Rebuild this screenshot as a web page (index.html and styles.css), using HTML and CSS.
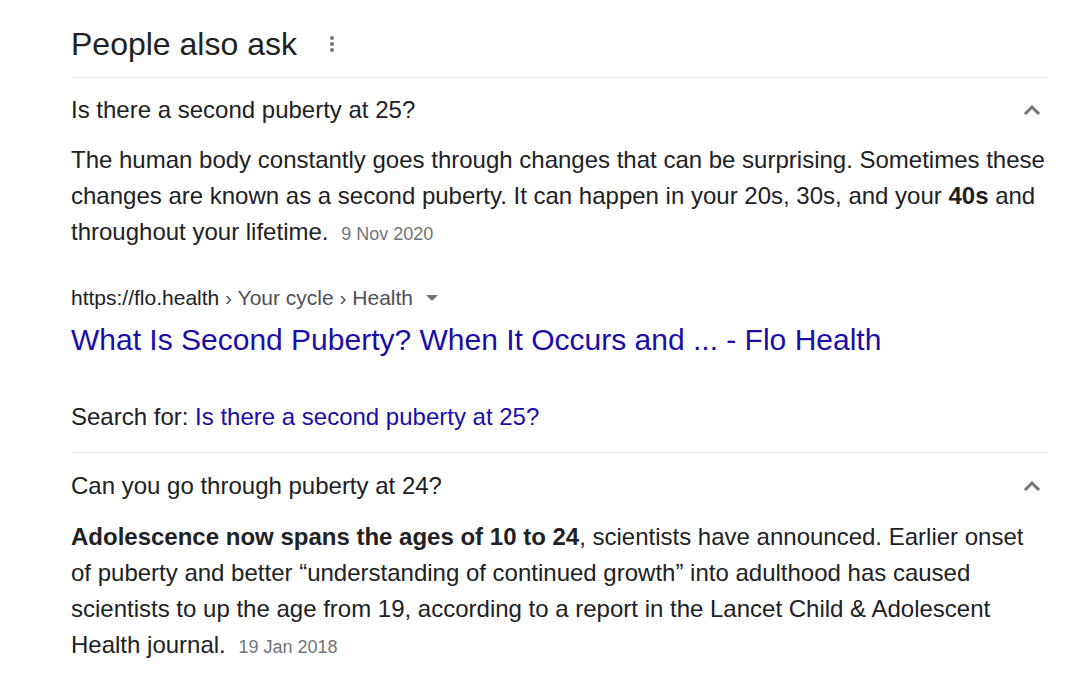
FILE: index.html
```html
<!DOCTYPE html>
<html>
  <head>
    <title>People also ask</title>
    <meta http-equiv="Content-Type" content="text/html; charset=UTF-8"/>
    <link rel="stylesheet" href="styles.css">
  </head>
  <body>
    <div class="paa">
      <div class="paa-head">
        <h2>People also ask</h2>
        <span class="more" aria-label="More options">
          <svg width="6" height="18" viewBox="0 0 6 18"><circle cx="3" cy="3" r="2"/><circle cx="3" cy="9" r="2"/><circle cx="3" cy="15" r="2"/></svg>
        </span>
      </div>

      <div class="item">
        <div class="question">
          <span>Is there a second puberty at 25?</span>
          <svg class="chevron" width="20" height="12" viewBox="0 0 20 12"><path d="M3 10 L10 3 L17 10"/></svg>
        </div>
        <div class="answer">
          <p>The human body constantly goes through changes that can be surprising. Sometimes these changes are known as a second puberty. It can happen in your 20s, 30s, and your <b>40s</b> and throughout your lifetime. <span class="date">9 Nov 2020</span></p>
          <div class="cite">https://flo.health <span class="crumbs">› Your cycle › Health</span><svg class="caret" width="14" height="8" viewBox="0 0 14 8"><path d="M1 1 L13 1 L7 7 Z"/></svg></div>
          <a class="title" href="#">What Is Second Puberty? When It Occurs and ... - Flo Health</a>
          <div class="search-for">Search for: <a href="#">Is there a second puberty at 25?</a></div>
        </div>
      </div>

      <div class="item">
        <div class="question">
          <span>Can you go through puberty at 24?</span>
          <svg class="chevron" width="20" height="12" viewBox="0 0 20 12"><path d="M3 10 L10 3 L17 10"/></svg>
        </div>
        <div class="answer">
          <p><b>Adolescence now spans the ages of 10 to 24</b>, scientists have announced. Earlier onset of puberty and better “understanding of continued growth” into adulthood has caused scientists to up the age from 19, according to a report in the Lancet Child &amp; Adolescent Health journal. <span class="date">19 Jan 2018</span></p>
        </div>
      </div>
    </div>
  </body>
</html>
```

FILE: styles.css
```css
body {
  margin: 0;
  background: #fff;
  font-family: 'Liberation Sans', Arial, sans-serif;
  color: #202124;
}

.paa {
  width: 977px;
  margin-left: 71px;
  padding-top: 24px;
}

.paa-head {
  display: flex;
  align-items: center;
  gap: 32px;
  height: 40px;
  padding-bottom: 13px;
  border-bottom: 1px solid #e8eaed;
}

.paa-head h2 {
  margin: 0;
  font-size: 32px;
  font-weight: normal;
  line-height: 40px;
}

.more svg {
  display: block;
  fill: #70757a;
}

.item + .item {
  border-top: 1px solid #e8eaed;
}

.question {
  display: flex;
  align-items: center;
  justify-content: space-between;
  height: 64px;
  font-size: 24px;
}

.item + .item .question {
  height: 66px;
}

.chevron {
  margin-right: 6px;
  fill: none;
  stroke: #70757a;
  stroke-width: 3;
}

.answer {
  font-size: 24px;
  line-height: 36px;
}

.answer p {
  margin: 0;
}

.date {
  font-size: 18px;
  color: #70757a;
  margin-left: 6px;
}

.answer p:last-child {
  padding-bottom: 12px;
}

.cite {
  margin-top: 31px;
  font-size: 21px;
  line-height: 30px;
}

.crumbs {
  color: #4d5156;
}

.caret {
  margin-left: 12px;
  margin-bottom: 3px;
  fill: #70757a;
}

.title {
  display: block;
  margin-top: 4px;
  color: #1a0dab;
  text-decoration: none;
  font-size: 30px;
  line-height: 46px;
}

.search-for {
  margin-top: 36px;
  padding-bottom: 17px;
}

.search-for a {
  color: #1a0dab;
  text-decoration: none;
}
```
